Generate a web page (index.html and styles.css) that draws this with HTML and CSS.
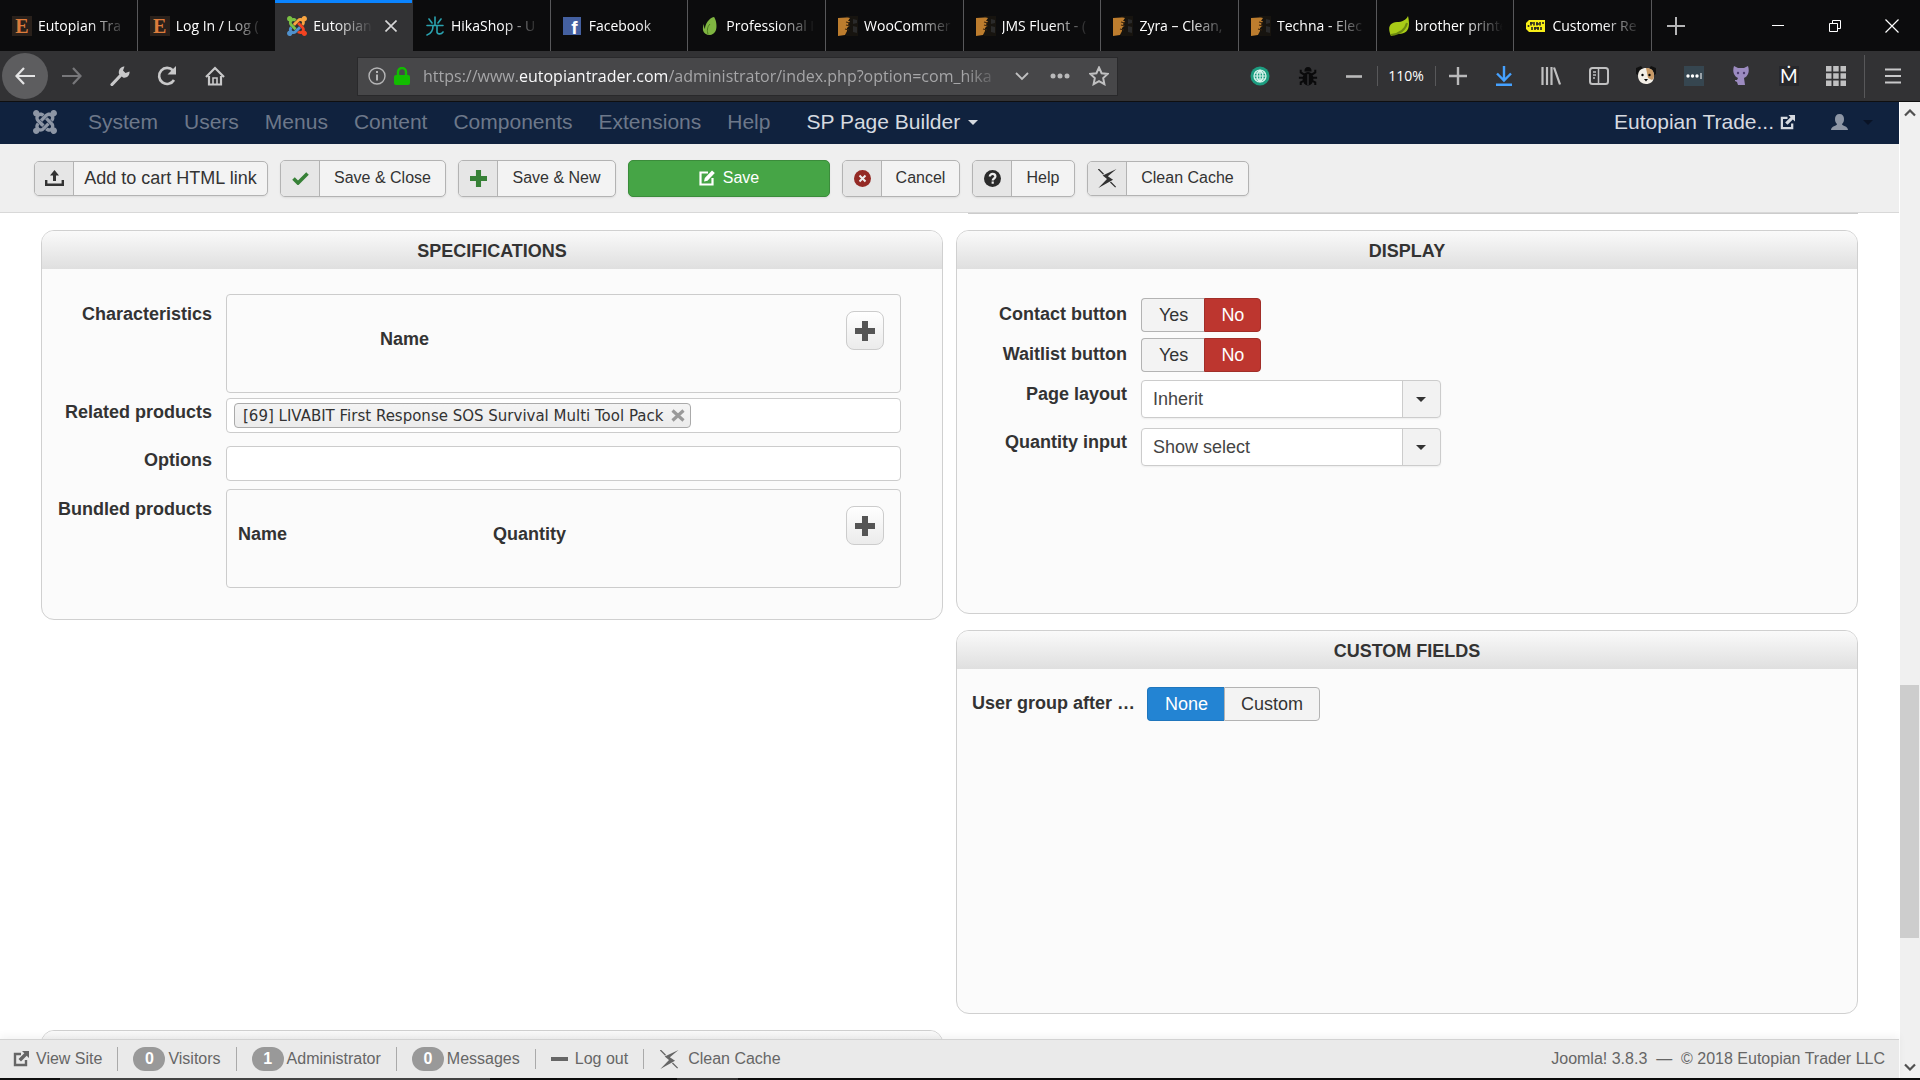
FILE: index.html
```html
<!DOCTYPE html>
<html lang="en">
<head>
<meta charset="utf-8">
<title>Eutopian Trader - Administration</title>
<link rel="stylesheet" href="styles.css">
</head>
<body>
<svg class="defs" aria-hidden="true">
  <symbol id="joomla" viewBox="0 32 448 448">
    <path class="j1" d="M.6 92.1C.6 58.8 27.4 32 60.4 32c30 0 54.5 21.9 59.2 50.2 32.6-7.6 67.1.6 96.5 30l-44.3 44.3c-20.5-20.5-42.6-16.3-55.4-3.5-14.3 14.3-14.3 37.9 0 52.2l99.5 99.5-44 44.3c-87.7-87.2-49.7-49.7-99.8-99.7-26.8-26.5-35-64.8-24.8-98.9C20.4 144.6.6 120.7.6 92.1z"/>
    <path class="j2" d="M130.1 208.5l44.3 44.3c10-10 89.7-89.7 99.7-99.8 14.3-14.3 37.6-14.3 51.9 0 12.8 12.8 17 35-3.5 55.4l44 44.3c31.2-31.2 38.5-67.6 28.9-101.2 29.2-4.1 51.9-29.2 51.9-59.5 0-33.2-26.8-60.1-59.8-60.1-30.3 0-55.4 22.5-59.5 51.6-33.8-9.9-71.7-1.5-98.3 25.1-18.3 19.1-71.1 71.5-99.6 99.9z"/>
    <path class="j3" d="M396.4 360.7c8.2-32.7-.9-68.5-26.3-93.9-11.8-12.2 5 4.7-99.5-99.7l-44.3 44.3 99.7 99.7c14.3 14.3 14.3 37.6 0 51.9-12.8 12.8-35 17-55.4-3.5l-44 44.3c27.6 30.2 68 38.8 102.7 28 5.5 27.4 29.7 48.1 58.9 48.1 33 0 59.8-26.8 59.8-60.1 0-30.2-22.5-55-51.6-59.1z"/>
    <path class="j4" d="M312.1 307.6l-44-44.3c-87 86.4-50.4 50.4-99.7 99.8-14.3 14.3-37.6 14.3-51.9 0-13.1-13.4-16.9-35.3 3.2-55.4l-44-44.3c-30.2 30.2-38 65.2-29.5 98.3-26.7 6-46.2 29.9-46.2 58.2C0 453.2 26.8 480 59.8 480c28.6 0 52.5-19.8 58.6-46.7 32.7 8.2 68.5-.6 94.2-26 32.1-32 12.2-12.4 99.5-99.7z"/>
  </symbol>
  <symbol id="themeforest" viewBox="0 0 20 20">
    <path fill="#17140f" d="M8 0h12v20H8z"/>
    <path fill="#2a2a2a" d="M15 3l4 1v3l-4 1zM15 10l4 1v6l-4-1z"/>
    <path fill="#bd7d2e" d="M0 2c4 0 8-1 12 0l-2 3h2l-2 3 1 2-2 2v3l-2 4-7 1z"/>
    <path d="M8 6l4 1M8 9l4 1M7 13l4 1" stroke="#3d260d" stroke-width="1.200"/>
  </symbol>
  <symbol id="external" viewBox="0 0 16 16">
    <path d="M8 3H2v11h11V9" fill="none" stroke="currentColor" stroke-width="2.4"/>
    <path d="M9 0h7v7l-2.300-2.300L8 10.500 5.500 8l5.800-5.700z" fill="currentColor"/>
  </symbol>
  <symbol id="flash" viewBox="0 0 22 22">
    <path d="M22 0L6 7.500l5 4L1 22l17-9.500-6-4z" fill="currentColor"/>
    <path d="M1 0l6 6M15 15l6 6" stroke="currentColor" stroke-width="1.500" fill="none"/>
  </symbol>
  <symbol id="plus" viewBox="0 0 20 20">
    <path d="M7 0h6v7h7v6h-7v7H7v-7H0V7h7z" fill="currentColor"/>
  </symbol>
</svg>

<header class="browser">
  <div class="tabstrip">
    <nav class="tabs" aria-label="Tabs">
      <a class="tab" href="#"><span class="fav fav-e">E</span><span class="tab-title">Eutopian Tra</span></a>
      <a class="tab" href="#"><span class="fav fav-e">E</span><span class="tab-title">Log In / Log (</span></a>
      <a class="tab active" href="#"><svg class="fav color"><use href="#joomla"/></svg><span class="tab-title">Eutopian</span>
        <svg class="tab-close" viewBox="0 0 12 12"><path d="M0.500.500l11 11M11.500.500l-11 11" stroke="#d7d7d8" stroke-width="1.600"/></svg></a>
      <a class="tab" href="#"><svg class="fav" viewBox="0 0 20 20"><g fill="none" stroke="#2aa3b0" stroke-width="1.600" stroke-linecap="round"><path d="M10 1v8M4 3l3 4M16 3l-3 4M2 9.500h16M8 10c0 5-3 8-6 9M12 10v6c0 2 4 3 6 0"/></g></svg><span class="tab-title">HikaShop - U</span></a>
      <a class="tab" href="#"><span class="fav fav-f">f</span><span class="tab-title">Facebook</span></a>
      <a class="tab" href="#"><svg class="fav" viewBox="0 0 20 20"><path d="M14 1c3 4 5 17-4 18-8 0-8-7-6-11 0 2 0 4 1 5C5 8 9 2 14 1z" fill="#7fb541"/><path d="M10 8c-3 3-3 7-2 10" stroke="#4d7a20" fill="none"/></svg><span class="tab-title">Professional I</span></a>
      <a class="tab" href="#"><svg class="fav"><use href="#themeforest"/></svg><span class="tab-title">WooCommer</span></a>
      <a class="tab" href="#"><svg class="fav"><use href="#themeforest"/></svg><span class="tab-title">JMS Fluent - (</span></a>
      <a class="tab" href="#"><svg class="fav"><use href="#themeforest"/></svg><span class="tab-title">Zyra – Clean,</span></a>
      <a class="tab" href="#"><svg class="fav"><use href="#themeforest"/></svg><span class="tab-title">Techna - Elec</span></a>
      <a class="tab" href="#"><svg class="fav" viewBox="0 0 20 20"><path d="M19 0c3 13-1 18-9 18-3 0-5 0-8 2-3-7-3-13 6-14 5 0 9-2 11-6z" fill="#a9cc17"/><path d="M2 19c8-1 14-4 16-12" stroke="#6d8a10" stroke-width="2" fill="none"/></svg><span class="tab-title">brother printe</span></a>
      <a class="tab" href="#"><svg class="fav" viewBox="0 0 20 20"><path d="M3 4h16v12H3l-3-3V7z" fill="#f7ee18"/><path d="M5 6v3.500M8 6v3.500M11 6v3.500M14 6v3.500M17 6v2M6 11v3M9 11v3M12 11v3M15 11v3M4 7h3M10 8h3M8 12h5" stroke="#222" stroke-width="1.600"/><circle cx="2.500" cy="10" r="1" fill="#222"/></svg><span class="tab-title">Customer Re</span></a>
    </nav>
    <button class="newtab" aria-label="New tab"><svg width="18" height="18" viewBox="0 0 18 18"><path d="M9 0v18M0 9h18" stroke="#b5b5b6" stroke-width="2"/></svg></button>
    <div class="winctl">
      <button aria-label="Minimize"><svg width="12" height="12" viewBox="0 0 12 12"><path d="M0 5.500h12" stroke="#fff"/></svg></button>
      <button aria-label="Restore"><svg width="12" height="12" viewBox="0 0 12 12"><path d="M.5 3.500h8v8h-8zM3.500 3V.5h8v8H9" stroke="#fff" fill="none"/></svg></button>
      <button aria-label="Close"><svg width="14" height="14" viewBox="0 0 14 14"><path d="M.5.5l13 13M13.500.5l-13 13" stroke="#fff" stroke-width="1.200"/></svg></button>
    </div>
  </div>

  <div class="toolbar">
    <div class="navbtns">
      <button class="back" aria-label="Back"><svg width="20" height="18" viewBox="0 0 20 18"><path d="M20 9H2M9 1L1.500 9 9 17" fill="none" stroke="#e4e4e5" stroke-width="2.200"/></svg></button>
      <button aria-label="Forward"><svg width="20" height="18" viewBox="0 0 20 18"><path d="M0 9h18M11 1l7.500 8L11 17" fill="none" stroke="#77777a" stroke-width="2.200"/></svg></button>
      <button aria-label="Tools"><svg width="20" height="20" viewBox="0 0 20 20"><path d="M2 18.500L11 9" stroke="#c8c8c9" stroke-width="3.200" stroke-linecap="round"/><path d="M14.500 0.500L13 4.500 15.500 7l4-1.500c.5 4-3 7-6.500 6L9 8C8 4 11 0 14.500.5z" fill="#c8c8c9"/></svg></button>
      <button aria-label="Reload"><svg width="20" height="20" viewBox="0 0 20 20"><path d="M16 4.500A8 8 0 1 0 17 14" fill="none" stroke="#c8c8c9" stroke-width="2.600"/><path d="M19 0v8.500h-8.500z" fill="#c8c8c9"/></svg></button>
      <button aria-label="Home"><svg width="20" height="20" viewBox="0 0 20 20"><path d="M1 11l9-9 9 9M4 10v8.500h12V10" fill="none" stroke="#c8c8c9" stroke-width="2.200"/><path d="M8 18v-6h4v6" fill="none" stroke="#c8c8c9" stroke-width="1.600"/></svg></button>
    </div>
    <div class="urlbar">
      <svg class="info" width="18" height="18" viewBox="0 0 18 18"><circle cx="9" cy="9" r="8" fill="none" stroke="#b5b5b6" stroke-width="1.400"/><path d="M9 4v2M9 7.500v6" stroke="#b5b5b6" stroke-width="2"/></svg>
      <svg class="lock" width="16" height="18" viewBox="0 0 16 18"><path d="M4 9V5a4 4 0 0 1 8 0v4" fill="none" stroke="#12bc00" stroke-width="2.400"/><rect y="8" width="16" height="10" rx="2" fill="#12bc00"/></svg>
      <span class="url">https://www.<b>eutopiantrader.com</b>/administrator/index.php?option=com_hika</span>
      <button aria-label="History"><svg width="14" height="9" viewBox="0 0 14 9"><path d="M1 1l6 6 6-6" fill="none" stroke="#c0c0c1" stroke-width="1.800"/></svg></button>
      <button aria-label="Page actions"><svg width="20" height="6" viewBox="0 0 20 6"><g fill="#b9b9ba"><circle cx="3" cy="3" r="2.500"/><circle cx="10" cy="3" r="2.500"/><circle cx="17" cy="3" r="2.500"/></g></svg></button>
      <button aria-label="Bookmark"><svg width="20" height="20" viewBox="0 0 20 20"><path d="M10 1.500l2.600 5.700 6.100.7-4.500 4.200 1.200 6.100L10 15.200l-5.400 3 1.200-6.100L1.300 7.900l6.100-.7z" fill="none" stroke="#c0c0c1" stroke-width="2"/></svg></button>
    </div>
    <div class="pair">
      <button aria-label="Globe"><svg width="20" height="20" viewBox="0 0 20 20"><circle cx="10" cy="10" r="9.500" fill="#1d9d80"/><g fill="none" stroke="#d8f3ec" stroke-width="1.200"><circle cx="10" cy="10" r="6"/><path d="M4 10h12M10 4v12M10 4c-4 3-4 9 0 12M10 4c4 3 4 9 0 12M5 7h10M5 13h10"/></g></svg></button>
      <button aria-label="Debug"><svg width="20" height="20" viewBox="0 0 20 22"><g stroke="#0a0a0b" stroke-width="2.200" fill="none"><path d="M2 4v3l3 2h10l3-2V4M0 13h20M2 21v-3l4-2M18 21v-3l-4-2"/></g><ellipse cx="10" cy="14" rx="6" ry="7.500" fill="#0a0a0b"/><path d="M6 6a4 5 0 0 1 8 0z" fill="#0a0a0b"/><path d="M10 9v12" stroke="#4a4a4c"/></svg></button>
    </div>
    <div class="zoomer">
      <button aria-label="Zoom out"><svg width="16" height="3" viewBox="0 0 16 3"><path d="M0 1.500h16" stroke="#b9b9ba" stroke-width="2.600"/></svg></button>
      <button class="pct">110%</button>
      <button aria-label="Zoom in"><svg width="18" height="18" viewBox="0 0 18 18"><path d="M9 0v18M0 9h18" stroke="#b9b9ba" stroke-width="2.400"/></svg></button>
    </div>
    <div class="exts">
      <button aria-label="Downloads"><svg width="18" height="20" viewBox="0 0 18 20"><path d="M9 0v14M2 7.500l7 7 7-7M1 18.700h16" fill="none" stroke="#45a1ff" stroke-width="2.400"/></svg></button>
      <button aria-label="Library"><svg width="20" height="18" viewBox="0 0 20 18"><path d="M1.500 0v18M6 0v18M10.500 0v18M13 .5L19 17.500" stroke="#c0c0c1" stroke-width="2.200"/></svg></button>
      <button aria-label="Sidebar"><svg width="20" height="18" viewBox="0 0 20 18"><rect x="1" y="1" width="18" height="16" rx="2.500" fill="none" stroke="#c0c0c1" stroke-width="2"/><path d="M9.500 1v16M4 5h3M4 8h3M4 11h2" stroke="#c0c0c1" stroke-width="1.500"/></svg></button>
      <button aria-label="Dog"><svg width="20" height="20" viewBox="0 0 20 20"><path d="M0 2l5-2 3 4-4 6-4-2zM20 2l-5-2-3 4 4 6 4-2z" fill="#111"/><path d="M2 10C2 4 6 2 10 2s8 2 8 8-4 8-8 8-8-3-8-8z" fill="#f2eee6"/><path d="M10 2c5 0 8 2 8 8 0 2-1 3-2 4l-4-2z" fill="#c99a66"/><circle cx="6.500" cy="9" r="1.200"/><circle cx="13.500" cy="9" r="1.200"/><path d="M8 13h4l-2 2.500z"/></svg></button>
      <button aria-label="Passwords"><svg width="20" height="20" viewBox="0 0 20 20"><path d="M0 0h20v20H0z" fill="#364650"/><g fill="#fff"><circle cx="4" cy="10" r="1.700"/><circle cx="8.500" cy="10" r="1.700"/><circle cx="13" cy="10" r="1.700"/><path d="M16.500 7h1v6h-1z"/></g></svg></button>
      <button aria-label="Cat"><svg width="16" height="20" viewBox="0 0 16 20"><path d="M1 0l4 2h6l4-2c1 3 1 6 0 8s-2 3-4 4l1 7H5l-1-3-2-1v-1h2l1-2c-2-1-3-2-4-4S0 3 1 0z" fill="#9c8bc0"/><circle cx="5" cy="7" r="1.200" fill="#4b3c6e"/><circle cx="11" cy="7" r="1.200" fill="#4b3c6e"/></svg></button>
      <button class="mext"><span>Ṁ</span></button>
      <button aria-label="Apps"><svg width="20" height="20" viewBox="0 0 20 20"><path d="M0 0h5.500v5.500H0zM7.200 0h5.500v5.500H7.200zM14.500 0H20v5.500h-5.500zM0 7.200h5.500v5.500H0zM7.200 7.200h5.500v5.500H7.200zM14.500 7.200H20v5.500h-5.500zM0 14.500h5.500V20H0zM7.200 14.500h5.500V20H7.200zM14.500 14.500H20V20h-5.500z" fill="#c0c0c1"/></svg></button>
    </div>
    <button class="menu" aria-label="Menu"><svg width="16" height="16" viewBox="0 0 16 16"><path d="M0 1.500h16M0 8h16M0 14.500h16" stroke="#c8c8c9" stroke-width="2.200"/></svg></button>
  </div>
</header>

<div class="viewport">
  <div class="page">
    <nav class="admin-nav">
      <a class="brand" href="#" aria-label="Joomla"><svg width="24" height="24"><use href="#joomla"/></svg></a>
      <a href="#">System</a><a href="#">Users</a><a href="#">Menus</a><a href="#">Content</a><a href="#">Components</a><a href="#">Extensions</a><a href="#">Help</a>
      <a class="bright builder" href="#">SP Page Builder <i class="caret"></i></a>
      <a class="bright site" href="#">Eutopian Trade... <svg width="15" height="15"><use href="#external"/></svg></a>
      <a class="user" href="#" aria-label="User"><svg width="17" height="16" viewBox="0 0 17 16"><path d="M8.500 0c3 0 4.500 2 4.500 5s-1 4-2 5c0 2 6 2 6 6H0c0-4 6-4 6-6-1-1-2-2-2-5s1.500-5 4.500-5z" fill="#8d96a5"/></svg><i class="caret dark"></i></a>
    </nav>

    <div class="actions">
      <button class="btn short w-link"><span class="ico"><svg width="19" height="16" viewBox="0 0 19 16"><path d="M9.500 0L14 5.500h-3V11H8V5.500H5z" fill="#333"/><path d="M1.200 10v4.800h16.600V10" fill="none" stroke="#333" stroke-width="2.400"/></svg></span><span class="txt large">Add to cart HTML link</span></button>
      <button class="btn w-close"><span class="ico green"><svg width="17" height="13" viewBox="0 0 17 13"><path d="M1.500 6.500l4.500 4.500L15.500 1.500" fill="none" stroke="currentColor" stroke-width="3.600"/></svg></span><span class="txt">Save &amp; Close</span></button>
      <button class="btn w-new"><span class="ico green"><svg width="17" height="17"><use href="#plus"/></svg></span><span class="txt">Save &amp; New</span></button>
      <button class="btn save"><svg width="16" height="16" viewBox="0 0 16 16"><path d="M9 2.500H1.500v12h12V8" fill="none" stroke="#fff" stroke-width="2.200"/><path d="M5 11.500l.8-3.500L13 .5 15.800 3 8.500 10.700z" fill="#fff"/></svg>Save</button>
      <button class="btn w-cancel"><span class="ico"><svg width="17" height="17" viewBox="0 0 17 17"><circle cx="8.500" cy="8.500" r="8.500" fill="#942a25"/><path d="M5.500 5.500l6 6M11.500 5.500l-6 6" stroke="#eee" stroke-width="2"/></svg></span><span class="txt">Cancel</span></button>
      <button class="btn w-help"><span class="ico"><svg width="17" height="17" viewBox="0 0 17 17"><circle cx="8.500" cy="8.500" r="8.500" fill="#2b2b2b"/><path d="M5.800 6.500c0-3.500 5.600-3.300 5.600 0 0 2-2.700 2-2.700 4M8.700 11.500v2.200" fill="none" stroke="#eee" stroke-width="2.200"/></svg></span><span class="txt">Help</span></button>
      <button class="btn short w-cache"><span class="ico"><svg width="20" height="19"><use href="#flash"/></svg></span><span class="txt">Clean Cache</span></button>
    </div>

    <main class="content">
      <div class="edge" aria-hidden="true"></div>
      <div class="panels">
        <section class="panel">
          <h2>Specifications</h2>
          <div class="fields specs">
            <span class="lbl deep">Characteristics</span>
            <div class="box">
              <table><thead><tr><th class="c-blank"></th><th>Name</th><th class="c-add"><button class="add" aria-label="Add"><svg width="20" height="20"><use href="#plus"/></svg></button></th></tr></thead></table>
            </div>
            <label class="lbl" for="related">Related products</label>
            <div class="tags"><span class="tag">[69] LIVABIT First Response SOS Survival Multi Tool Pack<button aria-label="Remove"><svg width="14" height="13" viewBox="0 0 14 13"><path d="M1.500 1.500l11 10M12.500 1.500l-11 10" stroke="#999" stroke-width="3.200"/></svg></button></span><input id="related" type="text"></div>
            <label class="lbl" for="options">Options</label>
            <input class="field" id="options" type="text">
            <span class="lbl deep">Bundled products</span>
            <div class="box">
              <table><thead><tr><th class="c-name">Name</th><th>Quantity</th><th class="c-add"><button class="add" aria-label="Add"><svg width="20" height="20"><use href="#plus"/></svg></button></th></tr></thead></table>
            </div>
          </div>
        </section>

        <div class="stack">
          <section class="panel tall">
            <h2>Display</h2>
            <div class="fields display">
              <span class="lbl">Contact button</span>
              <div class="toggle"><input type="radio" name="contact" id="c1"><label for="c1">Yes</label><input type="radio" name="contact" id="c0" checked><label class="red" for="c0">No</label></div>
              <span class="lbl">Waitlist button</span>
              <div class="toggle"><input type="radio" name="wait" id="w1"><label for="w1">Yes</label><input type="radio" name="wait" id="w0" checked><label class="red" for="w0">No</label></div>
              <label class="lbl" for="layout">Page layout</label>
              <div class="select"><select id="layout"><option>Inherit</option></select><i class="caret"></i></div>
              <label class="lbl" for="qty">Quantity input</label>
              <div class="select"><select id="qty"><option>Show select</option></select><i class="caret"></i></div>
            </div>
          </section>
          <section class="panel tall">
            <h2>Custom fields</h2>
            <div class="fields custom">
              <span class="lbl">User group after …</span>
              <div class="toggle"><input type="radio" name="group" id="g0" checked><label class="blue" for="g0">None</label><input type="radio" name="group" id="g1"><label for="g1">Custom</label></div>
            </div>
          </section>
        </div>

        <section class="panel"><h2></h2></section>
      </div>
    </main>

    <footer class="status">
      <a href="#"><svg class="ext" width="16" height="16"><use href="#external"/></svg>View Site</a>
      <a href="#"><b>0</b>Visitors</a>
      <a href="#"><b>1</b>Administrator</a>
      <a href="#"><b>0</b>Messages</a>
      <a href="#"><i class="dash"></i>Log out</a>
      <a href="#"><svg class="fl" width="20" height="19"><use href="#flash"/></svg>Clean Cache</a>
      <span class="copy">Joomla! 3.8.3 &nbsp;—&nbsp; © 2018 Eutopian Trader LLC</span>
    </footer>
  </div>
  <div class="scroll" aria-hidden="true">
    <svg width="12" height="8" viewBox="0 0 12 8"><path d="M1 6.500l5-5 5 5" fill="none" stroke="#505050" stroke-width="2.200"/></svg>
    <div class="track"><div class="thumb"></div></div>
    <svg width="12" height="8" viewBox="0 0 12 8"><path d="M1 1.500l5 5 5-5" fill="none" stroke="#505050" stroke-width="2.200"/></svg>
  </div>
</div>
<div class="taskbar" aria-hidden="true"></div>
</body>
</html>
```
FILE: styles.css
```css
* { box-sizing: border-box; }

body {
  margin: 0;
  height: 100vh;
  display: flex;
  flex-direction: column;
  overflow: hidden;
  background: #fff;
  color: #333;
  font: 18px/24px "Liberation Sans", Arial, sans-serif;
}

button, input, select { font: inherit; color: inherit; margin: 0; }
button { padding: 0; border: 0; background: none; display: flex; align-items: center; justify-content: center; }
a { color: inherit; text-decoration: none; }
svg { display: block; flex: none; }
.defs { position: absolute; width: 0; height: 0; }

/* Browser chrome */
.browser { flex: none; font: 14px/20px "Open Sans", sans-serif; color: #fff; }
.tabstrip { height: 51px; display: flex; background: #0c0c0d; }
.tabs { flex: 0 1 1652px; display: flex; min-width: 0; }
.tab {
  flex: 1 1 0; min-width: 0;
  display: flex; align-items: center; gap: 6px;
  padding: 0 10px 0 12px;
  border-right: 1px solid #58585a;
}
.tab:nth-child(2) { border-color: transparent; }
.tab.active { background: #323234; border-color: transparent; box-shadow: inset 0 3px #0a84ff; }
.fav { width: 20px; height: 20px; flex: none; }
.fav-e { font: bold 20px/20px "Liberation Serif", serif; color: #dd7c3c; text-align: center; background: #2a211b; }
.fav-f { width: 18px; height: 18px; margin-right: 2px; background: #4460a0; font: bold 19px/22px "Liberation Sans", sans-serif; text-align: right; padding-right: 3px; overflow: hidden; }
.tab-title {
  flex: 1; overflow: hidden; white-space: nowrap;
  -webkit-mask-image: linear-gradient(to left, transparent, #000 38px);
  mask-image: linear-gradient(to left, transparent, #000 38px);
}
.tab-close { width: 12px; height: 12px; margin: 0 5px 0 6px; }
.j1 { fill: var(--j1, #8d96a5); }
.j2 { fill: var(--j2, #8d96a5); }
.j3 { fill: var(--j3, #8d96a5); }
.j4 { fill: var(--j4, #8d96a5); }
.color { --j1: #7ac143; --j2: #f9a541; --j3: #f44321; --j4: #5091cd; }
.newtab { width: 48px; }
.winctl { display: flex; margin-left: auto; }
.winctl button { width: 57px; }

.toolbar { height: 51px; display: flex; align-items: center; background: #323234; border-bottom: 1px solid #0f0f10; }
.navbtns { display: flex; width: 239px; margin-right: 118px; padding-left: 2px; }
.navbtns button { flex: 1; height: 46px; }
.navbtns .back { flex: 0 0 46px; border-radius: 50%; background: #5d5d5f; }
.urlbar { flex: 1; min-width: 0; height: 39px; display: flex; align-items: center; background: #474749; border: 1px solid #29292b; padding: 0 8px 0 10px; }
.info { margin-right: 8px; }
.lock { margin-right: 13px; }
.url { flex: 1; overflow: hidden; white-space: nowrap; font-size: 16px; line-height: 24px; color: #a6a6a8; -webkit-mask-image: linear-gradient(to left, transparent, #000 40px); mask-image: linear-gradient(to left, transparent, #000 40px); }
.url b { font-weight: 400; color: #f9f9fa; }
.urlbar button { width: 38px; height: 30px; }
.urlbar button:last-child { width: 20px; margin-left: 10px; }
.pair { display: flex; width: 96px; margin-left: 118px; }
.pair button, .exts button { flex: 1; height: 40px; }
.zoomer { display: flex; width: 148px; }
.zoomer button { flex: 1; height: 20px; }
.zoomer .pct { flex: 0 0 59px; border: solid #58585a; border-width: 0 1px; }
.exts { display: flex; width: 380px; }
.mext span { width: 20px; background: #27282c; font-family: Lato, sans-serif; font-size: 19px; text-align: center; }
.menu { width: 56px; height: 43px; margin-left: 4px; border-left: 1px solid #58585a; }

/* Page */
.viewport { flex: 1; min-height: 0; display: flex; }
.page { flex: 1; min-width: 0; display: flex; flex-direction: column; }

.admin-nav {
  flex: none; height: 42px; display: flex; align-items: center; gap: 26px;
  padding: 0 26px 2px 33px;
  background: #10223e; color: #6d788a; font-size: 21px;
}
.brand { margin-right: 5px; }
.bright { color: #d6dae0; display: flex; align-items: center; gap: 8px; }
.builder { margin-left: 10px; }
.site { margin-left: auto; gap: 6px; }
.user { display: flex; align-items: center; gap: 15px; margin-left: 10px; }
.caret { width: 0; height: 0; border: 5px solid transparent; border-top-color: currentColor; border-bottom: 0; }
.caret.dark { border-top-color: #091326; }

.actions { flex: none; height: 69px; display: flex; align-items: center; gap: 12px; padding: 0 34px; background: #efefef; border-bottom: 1px solid #d8d8d8; font-size: 16px; }
.btn { height: 37px; align-items: stretch; border: 1px solid #b3b3b3; border-radius: 5px; background: #f3f3f3; overflow: hidden; box-shadow: 0 1px 2px rgba(0, 0, 0, .08); white-space: nowrap; }
.btn.short { height: 35px; }
.ico { flex: 0 0 39px; display: flex; align-items: center; justify-content: center; background: #e6e6e6; border-right: 1px solid #b3b3b3; }
.ico.green { color: #378137; }
.txt { flex: 1; display: flex; align-items: center; justify-content: center; }
.txt.large { font-size: 18px; }
.w-link { width: 234px; }
.w-close { width: 166px; }
.w-new { width: 158px; }
.save { width: 202px; align-items: center; gap: 8px; background: #46a546; border-color: #3b8c3b; color: #fff; }
.w-cancel { width: 118px; }
.w-help { width: 103px; }
.w-cache { width: 162px; }

.content { flex: 1; min-height: 0; overflow: hidden; padding: 0 41px; }
.edge { height: 1px; width: 49%; margin-left: auto; background: #ccc; }
.panels { display: grid; grid-template-columns: 1fr 1fr; gap: 16px 13px; margin-top: 16px; align-items: start; }
.stack { display: grid; gap: 16px; }
.panel { border: 1px solid #d0d0d0; border-radius: 13px; background: #fbfbfb; overflow: hidden; }
.panel h2 { margin: 0; height: 38px; padding-top: 8px; font-size: 18px; line-height: 24px; text-align: center; text-transform: uppercase; background: linear-gradient(#fafafa, #dfdfdf); }
.tall { min-height: 384px; }

.fields { display: grid; column-gap: 14px; align-items: start; }
.lbl { font-weight: 700; text-align: right; white-space: nowrap; padding-top: 2px; }
.lbl.deep { padding-top: 8px; }
.specs { grid-template-columns: 170px minmax(0, 1fr); padding: 25px 41px 31px 0; }
.box { height: 99px; padding: 16px 16px 0 11px; border: 1px solid #ccc; border-radius: 4px; margin-bottom: 5px; }
.box:last-child { margin-bottom: 0; }
table { width: 100%; table-layout: fixed; border-collapse: collapse; }
th { padding: 16px 0 0; text-align: left; vertical-align: top; }
th.c-blank { width: 142px; }
th.c-name { width: 255px; }
th.c-add { width: 38px; padding: 0; }
.add { width: 38px; height: 39px; border: 1px solid #ccc; border-radius: 8px; background: linear-gradient(#fff, #ebebeb); color: #555; }
.tags, .field { width: 100%; height: 35px; border: 1px solid #ccc; border-radius: 4px; background: #fff; }
.tags { display: flex; align-items: center; padding: 0 7px; margin-bottom: 13px; }
.field { margin-bottom: 8px; }
.tags input { flex: 1; min-width: 0; border: 0; background: none; outline: 0; }
.tag { display: flex; align-items: center; gap: 8px; height: 25px; padding: 0 5px 0 8px; border: 1px solid #aaa; border-radius: 4px; background: linear-gradient(#f4f4f4, #ececec); font: 15px/22px "DejaVu Sans", Verdana, sans-serif; white-space: nowrap; }

.display { grid-template-columns: 170px 1fr; padding: 29px 40px 0 0; }
.display .toggle { margin-bottom: 6px; }
.display .lbl, .custom .lbl { padding-top: 4px; }
.custom { grid-template-columns: 161px 1fr; padding: 18px 15px 0; }
.custom .lbl { text-align: left; }
.toggle { display: flex; height: 34px; }
.toggle input { position: absolute; opacity: 0; }
.toggle label { padding: 4px 16px; border: 1px solid #b3b3b3; background: #f3f3f3; }
.toggle label:nth-of-type(1) { border-radius: 4px 0 0 4px; border-right-width: 0; padding-left: 17px; }
.toggle label:nth-of-type(2) { border-radius: 0 4px 4px 0; }
.toggle input:checked + .red { background: #bd362f; border-color: #a12e28; color: #fff; }
.toggle input:checked + .blue { background: #2384d3; border-color: #1f76bd; color: #fff; }
.select { width: 300px; height: 38px; margin: 2px 0 8px; display: grid; grid-template-columns: 1fr 38px; align-items: center; justify-items: center; border: 1px solid #ccc; border-radius: 4px; background: linear-gradient(to left, #f2f2f2 37px, #ccc 37px, #ccc 38px, #fff 38px); box-shadow: 0 1px 2px rgba(0, 0, 0, .06); }
select { appearance: none; width: 100%; height: 36px; border: 0; background: none; padding: 0 11px; color: #444; outline: 0; }

.status { flex: none; height: 39px; display: flex; align-items: center; padding: 0 14px 0 0; background: #eaeaea; border-top: 1px solid #d2d2d2; box-shadow: 0 -3px 8px rgba(0, 0, 0, .05); position: relative; color: #666; font-size: 16px; white-space: nowrap; }
.status a { display: flex; align-items: center; padding: 0 15px; border-left: 1px solid #aaa; line-height: 20px; }
.status a:first-child { border: 0; padding-left: 13px; }
.status b { min-width: 32px; height: 24px; line-height: 24px; margin-right: 3px; border-radius: 12px; background: #999; color: #fff; text-align: center; }
.ext { margin-right: 7px; }
.fl { margin-right: 9px; }
.dash { width: 17px; height: 4px; margin-right: 7px; background: #666; }
.copy { margin-left: auto; }

.scroll { flex: 0 0 21px; display: flex; flex-direction: column; align-items: center; justify-content: space-between; padding: 7px 0; background: #f0f0f0; border-left: 1px solid #fff; }
.track { flex: 1; width: 100%; display: flex; flex-direction: column; }
.track::before { content: ""; flex: 568; }
.thumb { flex: 253; background: #cdcdcd; margin-right: 1px; }
.track::after { content: ""; flex: 125; }

.taskbar { flex: none; height: 2px; background: linear-gradient(to right, #101010 60px, #444 60px, #444 490px, #0c0c0c 490px, #0c0c0c 677px, #333 677px, #333 738px, #0c0c0c 738px); }
```
